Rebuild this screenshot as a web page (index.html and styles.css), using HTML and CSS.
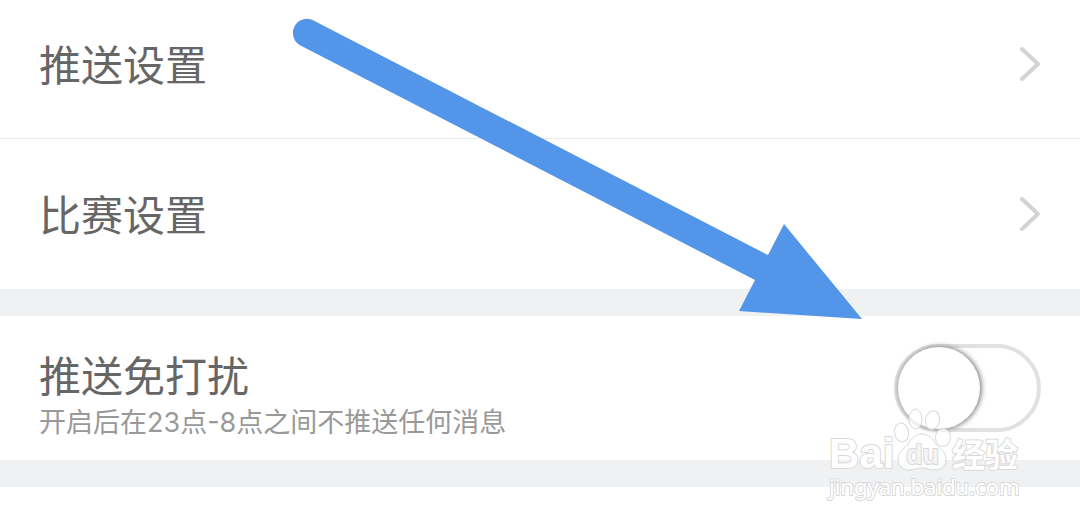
FILE: index.html
```html
<!DOCTYPE html>
<html lang="zh-CN">
<head>
<meta charset="utf-8">
<meta name="viewport" content="width=device-width, initial-scale=1">
<title>设置</title>
<link rel="stylesheet" href="styles.css">
</head>
<body>
<main class="settings">
  <nav class="group">
    <a class="row row-first" href="#push">
      <span class="title">推送设置</span>
      <svg class="chevron" viewBox="0 0 24 36" aria-hidden="true"><path d="M5 3 L21 18 L5 33"/></svg>
    </a>
    <a class="row" href="#match">
      <span class="title">比赛设置</span>
      <svg class="chevron" viewBox="0 0 24 36" aria-hidden="true"><path d="M5 3 L21 18 L5 33"/></svg>
    </a>
  </nav>
  <section class="group">
    <div class="row row-switch">
      <label class="labels" for="quiet">
        <span class="title">推送免打扰</span>
        <span class="note">开启后在23点-8点之间不推送任何消息</span>
      </label>
      <input class="switch" id="quiet" type="checkbox" role="switch">
    </div>
  </section>
</main>
<svg class="arrow" viewBox="0 0 580 310" aria-hidden="true">
  <path d="M33.500 20.500 L488 255 L504 224 L582 319 L459 311 L475 280 L20.500 45.500 A14 14 0 0 1 33.500 20.500 Z"/>
</svg>
<svg class="watermark" viewBox="0 0 204 108" role="img" aria-label="Baidu 经验">
  <g class="mark">
    <text class="brand" x="5" y="66">Bai</text>
    <ellipse cx="77.500" cy="30.500" rx="7" ry="9.500" transform="rotate(-8 77 30)"/>
    <ellipse cx="91.500" cy="17" rx="6.500" ry="10"/>
    <ellipse cx="108.500" cy="18" rx="7" ry="9.500" transform="rotate(12 108 18)"/>
    <ellipse cx="119" cy="35.500" rx="7.500" ry="9"/>
    <path d="M98 32 C91 32 87 37 84 42 C80 47 74 50 74 57 C74 64 78 68 85 68 C91 68 94 66 98 66 C103 66 106 68 111 68 C118 68 122 64 122 57 C122 50 116 47 112 42 C109 37 105 32 98 32 Z"/>
    <text class="du" x="82" y="62">du</text>
    <text class="cn" x="128" y="65">经验</text>
    <text class="url" x="5" y="93">jingyan.baidu.com</text>
  </g>
</svg>
</body>
</html>
```
FILE: styles.css
```css
* {
  box-sizing: border-box;
}

body {
  position: relative;
  min-height: 100vh;
  margin: 0;
  background: #fff;
  font-family: Inter, "Noto Sans CJK SC", sans-serif;
}

.group {
  background: #fff;
  border-bottom: 27px solid #f0f1f3;
}

.row {
  display: flex;
  align-items: center;
  justify-content: space-between;
  height: 150px;
  padding: 0 39px;
  color: #666;
  text-decoration: none;
}

.row-first {
  height: 139px;
  padding-bottom: 10px;
  border-bottom: 1px solid #e9e9e9;
}

.row-switch {
  height: 144px;
}

.title {
  padding-bottom: 2px;
  font-family: "Noto Sans CJK SC", sans-serif;
  font-size: 42px;
  line-height: 60px;
}

.labels {
  display: flex;
  flex-direction: column;
  padding-top: 8px;
}

.note {
  color: #999;
  font-size: 27px;
  line-height: 34px;
}

.chevron {
  width: 24px;
  height: 36px;
  fill: none;
  stroke: #d3d3d3;
  stroke-width: 4;
  stroke-linecap: round;
  stroke-linejoin: round;
}

.switch {
  appearance: none;
  display: flex;
  width: 147px;
  height: 88px;
  margin: 0;
  border: 4px solid #e1e1e1;
  border-radius: 44px;
  background: #fff;
}

.switch::before {
  content: "";
  width: 82px;
  height: 82px;
  margin: -1px 0;
  border-radius: 50%;
  background: #fff;
  box-shadow: 1px 0 5px 1px #888;
}

.switch:checked {
  justify-content: flex-end;
}

.arrow {
  position: absolute;
  top: 0;
  left: 280px;
  width: 580px;
  height: 310px;
  overflow: visible;
  fill: #5295e9;
  pointer-events: none;
}

.watermark {
  position: absolute;
  top: 402px;
  right: 52px;
  width: 204px;
  height: 108px;
  pointer-events: none;
}

.mark {
  fill: #fff;
  fill-opacity: 0.75;
  stroke: #d9d9d9;
  stroke-width: 1;
  stroke-linejoin: round;
}

.mark text {
  fill-opacity: 1;
  stroke-width: 2;
  paint-order: stroke;
}

.mark .brand {
  font: bold 42px "Liberation Sans", sans-serif;
}

.mark .du {
  font: bold 27px "Liberation Sans", sans-serif;
  fill: #f4f4f4;
}

.mark .cn {
  font: bold 33px "Noto Sans CJK SC", sans-serif;
}

.mark .url {
  font: 22px "Noto Sans", sans-serif;
}
```
